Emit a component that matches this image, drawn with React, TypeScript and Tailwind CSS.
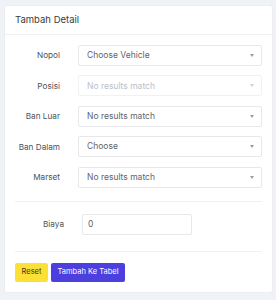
import React from "react";

function Caret({ light }: { light?: boolean }) {
  return (
    <svg width="4" height="3" viewBox="0 0 4 3" className="shrink-0">
      <path d="M0 0 L4 0 L2 3 Z" fill={light ? "#cfd2d6" : "#9a9ea4"} />
    </svg>
  );
}

function Select({ text, disabled }: { text: string; disabled?: boolean }) {
  return (
    <div
      className={`flex h-[21px] w-[184px] items-center justify-between rounded-[2px] border bg-white pl-[8px] pr-[7px] ${
        disabled ? "border-[#f0f1f3]" : "border-[#e6e8eb]"
      }`}
    >
      <span className={`text-[8.5px] ${disabled ? "text-[#bcc0c5]" : "text-[#5f646b]"}`}>{text}</span>
      <Caret light={disabled} />
    </div>
  );
}

function Row({ label, children }: { label: string; children: React.ReactNode }) {
  return (
    <div className="flex items-center">
      <div className="w-[49px] whitespace-nowrap text-right text-[8.2px] text-[#4d525a]">{label}</div>
      <div className="ml-[18px]">{children}</div>
    </div>
  );
}

export default function App() {
  return (
    <div
      className="h-[300px] w-[276px] bg-[#eff2f6] pl-[4px] pt-[5px]"
      style={{ fontFamily: "Inter, 'Noto Sans', sans-serif" }}
    >
      <div className="h-[288px] w-[269px] rounded-[3px] border border-[#eceef1] bg-white">
        <div className="flex h-[29px] items-center border-b border-[#eef0f3] px-[10px] text-[9.5px] text-[#383d43]">
          Tambah Detail
        </div>
        <div className="px-[10px] pt-[10px]">
          <div className="flex flex-col gap-[9.4px]">
            <Row label="Nopol">
              <Select text="Choose Vehicle" />
            </Row>
            <Row label="Posisi">
              <Select text="No results match" disabled />
            </Row>
            <Row label="Ban Luar">
              <Select text="No results match" />
            </Row>
            <Row label="Ban Dalam">
              <Select text="Choose" />
            </Row>
            <Row label="Marset">
              <Select text="No results match" />
            </Row>
          </div>
          <div className="mt-[13px] border-t border-[#eef0f3]" />
          <div className="mt-[12px]">
            <Row label="Biaya">
              <div className="flex h-[21px] w-[110px] items-center rounded-[2px] border border-[#e6e8eb] bg-white pl-[5px] text-[8.5px] text-[#5f646b]">
                0
              </div>
            </Row>
          </div>
          <div className="mt-[16px] border-t border-[#eef0f3]" />
          <div className="mt-[11px] flex gap-[3px]">
            <button className="flex h-[19px] w-[33px] items-center justify-center rounded-[2px] bg-[#fde036] text-[7.5px] text-[#3a3520]">
              Reset
            </button>
            <button className="flex h-[19px] w-[74px] items-center justify-center rounded-[2px] bg-[#4b3fe0] text-[7.5px] text-white">
              Tambah Ke Tabel
            </button>
          </div>
        </div>
      </div>
    </div>
  );
}
